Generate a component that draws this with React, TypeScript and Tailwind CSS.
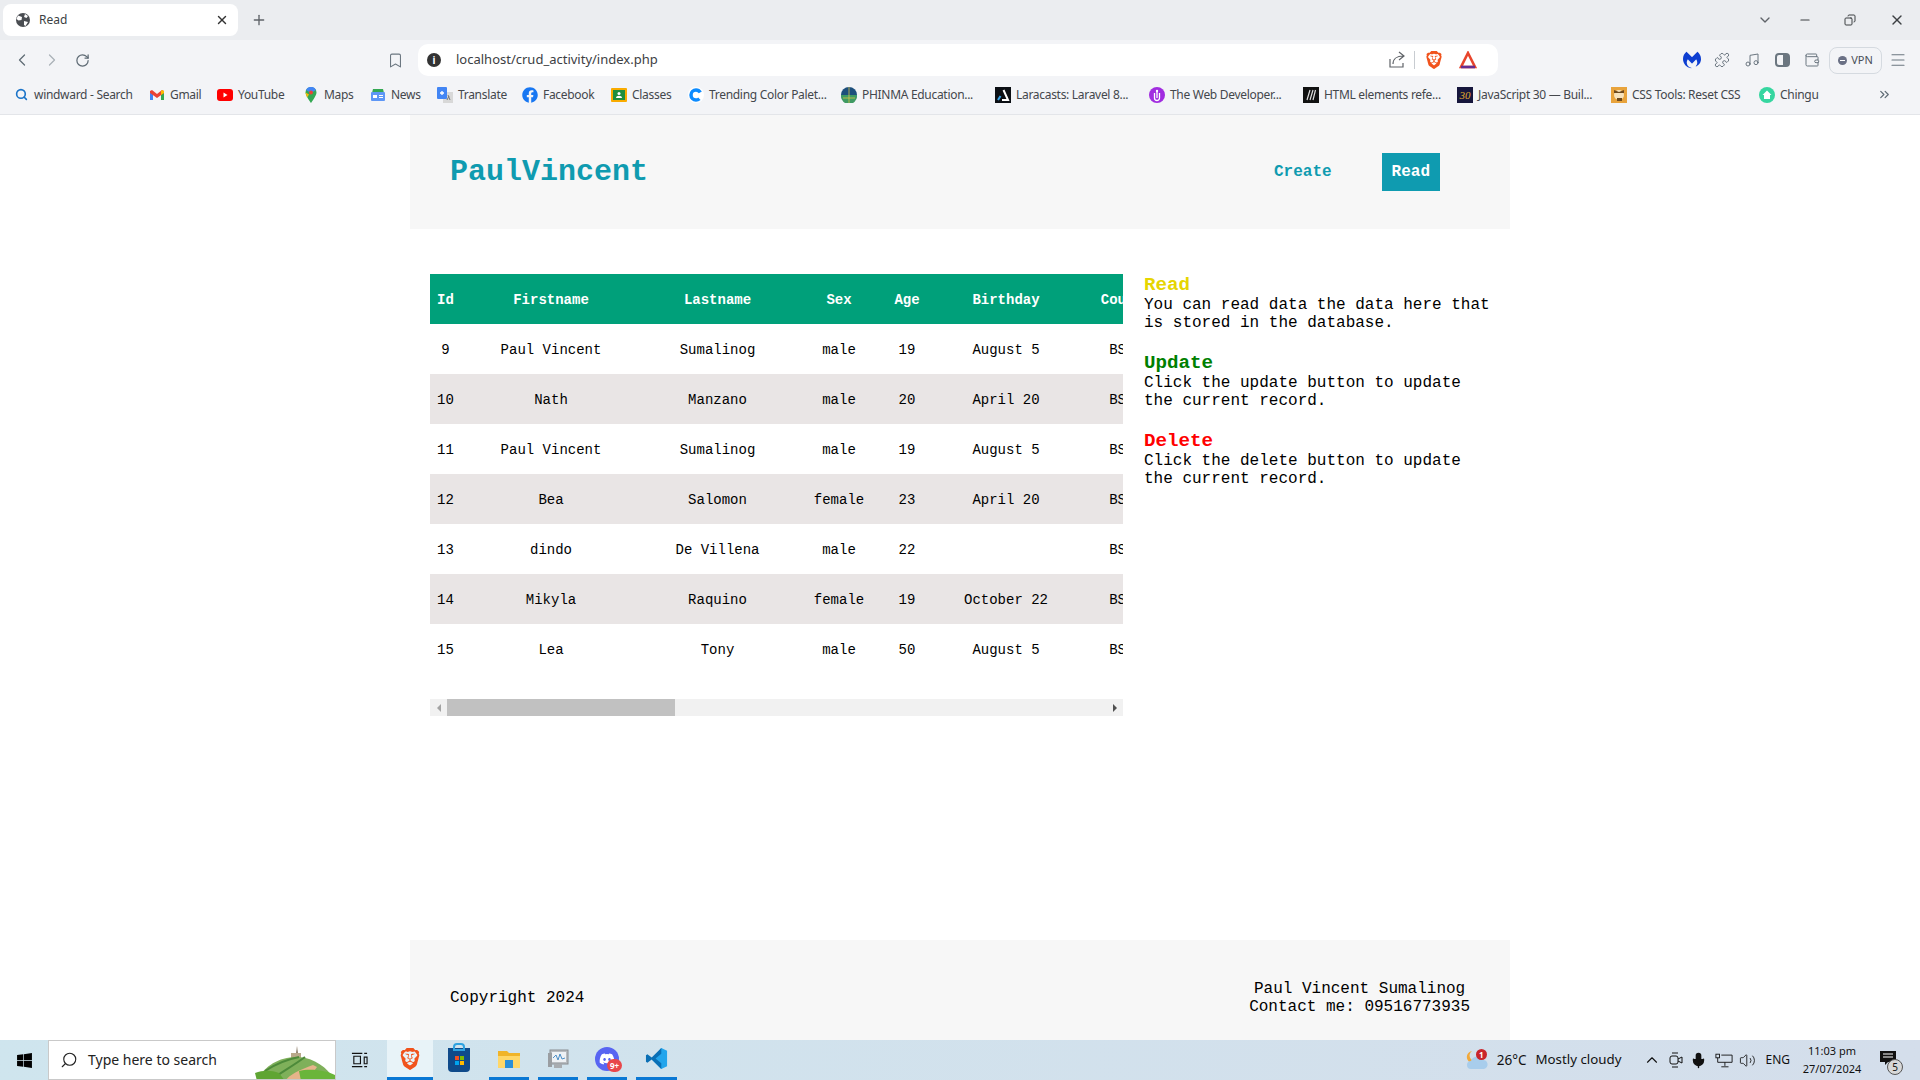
import { ChevronDown, ChevronLeft, ChevronRight, ChevronUp, ChevronsRight, Bookmark, Copy, Menu, Mic, Minus, Music, Plus, Puzzle, RotateCw, Search, Volume2, Wallet, X } from "lucide-react";
import { FaDiscord, FaFacebook, FaWindows } from "react-icons/fa";
import { SiBrave, SiMalwarebytes } from "react-icons/si";

const uiFont = "font-['Noto_Sans','Open_Sans',sans-serif]";

const rows = [
  ["9", "Paul Vincent", "Sumalinog", "male", "19", "August 5", "BSIT"],
  ["10", "Nath", "Manzano", "male", "20", "April 20", "BSIT"],
  ["11", "Paul Vincent", "Sumalinog", "male", "19", "August 5", "BSIT"],
  ["12", "Bea", "Salomon", "female", "23", "April 20", "BSIT"],
  ["13", "dindo", "De Villena", "male", "22", "", "BSIT"],
  ["14", "Mikyla", "Raquino", "female", "19", "October 22", "BSIT"],
  ["15", "Lea", "Tony", "male", "50", "August 5", "BSIT"],
];

const headers = ["Id", "Firstname", "Lastname", "Sex", "Age", "Birthday", "Course"];

function Favicon({ name }: { name: string }) {
  switch (name) {
    case "search":
      return <Search size={13} strokeWidth={3} className="text-[#1a73c8]" />;
    case "gmail":
      return (
        <svg viewBox="0 0 16 16" className="w-4 h-4">
          <path d="M1 4v9h3V7z" fill="#4285f4" />
          <path d="M15 4v9h-3V7z" fill="#34a853" />
          <path d="M1 4l2-1 5 4 5-4 2 1v2l-7 5-7-5z" fill="#ea4335" />
          <path d="M13 3l2 1v2l-3 2V4z" fill="#fbbc04" />
        </svg>
      );
    case "youtube":
      return (
        <svg viewBox="0 0 16 16" className="w-4 h-4">
          <rect x="0" y="2" width="16" height="12" rx="3" fill="#f00" />
          <path d="M6.5 5.5v5l4-2.5z" fill="#fff" />
        </svg>
      );
    case "maps":
      return (
        <svg viewBox="0 0 16 16" className="w-4 h-4">
          <path d="M8 0a5.5 5.5 0 0 0-5.5 5.5C2.500 9 8 16 8 16s5.500-7 5.500-10.500A5.500 5.500 0 0 0 8 0z" fill="#34a853" />
          <path d="M3 3l5 3 5-3a5.500 5.500 0 0 0-10 0z" fill="#4285f4" />
          <path d="M2.500 5.500l3.500 2-2 3z" fill="#fbbc04" />
          <circle cx="8" cy="5.500" r="2" fill="#ea4335" />
        </svg>
      );
    case "news":
      return (
        <svg viewBox="0 0 16 16" className="w-4 h-4">
          <path d="M3 2h10l1 4H2z" fill="#34a853" />
          <rect x="1" y="5" width="14" height="9" rx="1" fill="#5e97f6" />
          <rect x="3" y="8" width="4" height="3" fill="#fff" />
          <rect x="9" y="8" width="4" height="1" fill="#fff" />
          <rect x="9" y="10" width="4" height="1" fill="#fff" />
        </svg>
      );
    case "translate":
      return (
        <svg viewBox="0 0 16 16" className="w-4 h-4">
          <rect x="6" y="5" width="10" height="11" fill="#d8d8d8" />
          <rect x="0" y="0" width="10" height="12" rx="1" fill="#4285f4" />
          <path d="M3 6h4M5 4v4" stroke="#fff" strokeWidth="1.300" />
          <path d="M11 8l2 5M12 9l-2 4" stroke="#777" strokeWidth="1" />
        </svg>
      );
    case "facebook":
      return <FaFacebook size={16} className="text-[#1877f2]" />;
    case "classes":
      return (
        <svg viewBox="0 0 16 16" className="w-4 h-4">
          <rect x="0" y="1" width="16" height="14" rx="1" fill="#f9ab00" />
          <rect x="2" y="3" width="12" height="10" fill="#1e8e3e" />
          <circle cx="8" cy="6.500" r="1.500" fill="#fff" />
          <path d="M5 11c0-3 6-3 6 0z" fill="#fff" />
        </svg>
      );
    case "color":
      return (
        <svg viewBox="0 0 16 16" className="w-4 h-4">
          <circle cx="8" cy="8" r="8" fill="#fff" />
          <circle cx="8" cy="8" r="5" fill="none" stroke="#0d8bff" strokeWidth="3.500" strokeDasharray="24 8" strokeDashoffset="-4" />
        </svg>
      );
    case "phinma":
      return (
        <svg viewBox="0 0 16 16" className="w-4 h-4">
          <circle cx="8" cy="8" r="8" fill="#1d4f7c" />
          <path d="M0 8h16v1a8 8 0 0 1-16 0z" fill="#3f9a63" />
          <path d="M8 0v16M2 11h12" stroke="#d6c34a" strokeWidth="0.800" />
        </svg>
      );
    case "laracasts":
      return (
        <svg viewBox="0 0 16 16" className="w-4 h-4">
          <rect width="16" height="16" fill="#0b0f14" />
          <path d="M8.500 3L13 13H7" fill="none" stroke="#fff" strokeWidth="2" />
          <path d="M3 13l2.500-4" stroke="#38a3e8" strokeWidth="2" />
        </svg>
      );
    case "webdev":
      return (
        <svg viewBox="0 0 16 16" className="w-4 h-4">
          <circle cx="8" cy="8" r="8" fill="#a12ce0" />
          <path d="M5.500 6v5a2.500 2.500 0 0 0 5 0V6M8 5v6" fill="none" stroke="#fff" strokeWidth="1.300" />
          <circle cx="8" cy="4" r="1.200" fill="#fff" />
        </svg>
      );
    case "mdn":
      return (
        <svg viewBox="0 0 16 16" className="w-4 h-4">
          <rect width="16" height="16" fill="#111" />
          <path d="M4 13L7 3M7 13l3-10M10 13l2.500-10" stroke="#ddd" strokeWidth="1.200" />
        </svg>
      );
    case "js30":
      return (
        <div className="w-4 h-4 bg-[#16163c] text-[#e0a92e] text-[11px] leading-4 text-center italic font-['Liberation_Serif',serif]">
          30
        </div>
      );
    case "css":
      return (
        <svg viewBox="0 0 16 16" className="w-4 h-4">
          <rect width="16" height="16" fill="#e8a33c" />
          <circle cx="8" cy="8" r="5" fill="#f6e2bd" />
          <path d="M3 3l5 2 5-2v3H3zM6 11h5v3H6z" fill="#6e4a1f" />
        </svg>
      );
    default:
      return (
        <svg viewBox="0 0 16 16" className="w-4 h-4">
          <circle cx="8" cy="8" r="8" fill="#36d6a0" />
          <path d="M8 3.500L3.500 8H5v4h6V8h1.500z" fill="#fff" />
        </svg>
      );
  }
}

const bookmarks = [
  { icon: "search", label: "windward - Search", box: "w-[136px]" },
  { icon: "gmail", label: "Gmail", box: "w-[68px]" },
  { icon: "youtube", label: "YouTube", box: "w-[86px]" },
  { icon: "maps", label: "Maps", box: "w-[67px]" },
  { icon: "news", label: "News", box: "w-[67px]" },
  { icon: "translate", label: "Translate", box: "w-[85px]" },
  { icon: "facebook", label: "Facebook", box: "w-[89px]" },
  { icon: "classes", label: "Classes", box: "w-[77px]" },
  { icon: "color", label: "Trending Color Palet...", box: "w-[153px]" },
  { icon: "phinma", label: "PHINMA Education...", box: "w-[154px]" },
  { icon: "laracasts", label: "Laracasts: Laravel 8...", box: "w-[154px]" },
  { icon: "webdev", label: "The Web Developer...", box: "w-[154px]" },
  { icon: "mdn", label: "HTML elements refe...", box: "w-[154px]" },
  { icon: "js30", label: "JavaScript 30 — Buil...", box: "w-[154px]" },
  { icon: "css", label: "CSS Tools: Reset CSS", box: "w-[148px]" },
  { icon: "chingu", label: "Chingu", box: "w-[60px]" },
];

function BrowserChrome() {
  return (
    <div className={`shrink-0 ${uiFont}`}>
      {/* Tab strip */}
      <div className="h-10 bg-[#ebedf0] flex items-center">
        <div className="ml-[3px] w-[235px] h-8 bg-white rounded-lg flex items-center pl-3 pr-[9px]">
          <svg viewBox="0 0 16 16" className="w-4 h-4 shrink-0">
            <circle cx="8" cy="8" r="7" fill="#4a4d52" />
            <path d="M3 3.500L7 5l-.5 3-3 .5L1.500 7zM10 2l3 2-1.500 2L9 5zM9 9l4 1-2.500 4L9 13z" fill="#fff" />
          </svg>
          <span className="ml-2 text-xs text-[#3c3f43]">Read</span>
          <X size={14} strokeWidth={2.4} className="ml-auto text-[#333]" />
        </div>
        <Plus size={16} className="ml-[13px] text-[#5f6368]" />
        <div className="ml-auto flex items-center text-[#3c4043]">
          <ChevronDown size={16} className="mr-[25px] text-[#5f6368]" />
          <Minus size={14} className="mr-[32px]" />
          <Copy size={12} className="mr-[33px] -scale-x-100" />
          <X size={16} className="mr-[15px]" />
        </div>
      </div>

      {/* Toolbar */}
      <div className="h-10 bg-[#f3f4f7] flex items-center pl-[7px]">
        <div className="w-[30px] flex justify-center"><ChevronLeft size={20} strokeWidth={1.500} className="text-[#5f6b75]" /></div>
        <div className="w-[30px] flex justify-center"><ChevronRight size={20} strokeWidth={1.500} className="text-[#aab1b8]" /></div>
        <div className="w-[30px] flex justify-center"><RotateCw size={15} className="text-[#5f6b75]" /></div>
        <div className="w-[30px] ml-[283px] flex justify-center"><Bookmark size={17} strokeWidth={1.500} className="text-[#6b7680]" /></div>
        <div className="ml-2 w-[1080px] h-8 bg-white rounded-[10px] flex items-center pl-2 pr-[21px]">
          <div className="w-[14px] h-[14px] mx-px rounded-full bg-[#333] text-white text-[10px] leading-[14px] font-bold text-center">i</div>
          <span className="ml-[14px] text-[13px] text-[#3c4043]">localhost/crud_activity/index.php</span>
          <svg viewBox="0 0 18 18" className="ml-auto w-[18px] h-[18px]" fill="none" stroke="#5f6368" strokeWidth="1.200">
            <path d="M2 8v8h13v-4" />
            <path d="M5 13c0-5 4-8 10-8M11 1l5 4-5 4" />
          </svg>
          <div className="ml-2 w-px h-[18px] bg-[#c8ccd1]" />
          <SiBrave size={18} className="ml-[10px] text-[#f1531c]" />
          <svg viewBox="0 0 18 18" className="ml-4 w-[18px] h-[18px]">
            <path d="M9 2l7 14H2z" fill="none" stroke="#e8452c" strokeWidth="2.600" />
            <path d="M2 16h14" stroke="#662d91" strokeWidth="2.600" />
          </svg>
        </div>
        <div className="w-[30px] ml-[179px] flex justify-center"><SiMalwarebytes size={18} className="text-[#0d3ed1]" /></div>
        <div className="w-[30px] flex justify-center"><Puzzle size={16} strokeWidth={1.500} className="text-[#6b7680]" /></div>
        <div className="w-[30px] flex justify-center"><Music size={16} strokeWidth={1.500} className="text-[#6b7680]" /></div>
        <div className="w-[30px] flex justify-center">
          <div className="w-[15px] h-[14px] border-2 border-[#6b7680] rounded-sm flex justify-end"><div className="w-[5px] bg-[#6b7680]" /></div>
        </div>
        <div className="w-[30px] flex justify-center"><Wallet size={16} strokeWidth={1.500} className="text-[#6b7680]" /></div>
        <div className="ml-0.5 w-[53px] h-[27px] border border-[#d5dae0] rounded-lg flex items-center justify-center gap-1 text-[11px] text-[#4a4f57]">
          <div className="w-[9px] h-[9px] rounded-full bg-[#6a7085] flex items-center justify-center"><div className="w-[5px] h-px bg-white" /></div>
          VPN
        </div>
        <div className="w-[30px] ml-px flex justify-center"><Menu size={18} strokeWidth={1.500} className="text-[#6b7680]" /></div>
      </div>

      {/* Bookmarks bar */}
      <div className="h-[35px] pb-[5px] bg-[#f3f4f7] border-b border-[#e3e5e9] flex items-center pl-[13px]">
        {bookmarks.map((b) => (
          <div key={b.label} className={`${b.box} shrink-0 flex items-center whitespace-nowrap text-xs text-[#44474c]`}>
            <div className="w-4 h-4 flex items-center justify-center shrink-0"><Favicon name={b.icon} /></div>
            <span className="ml-[5px] tracking-[-0.3px]">{b.label}</span>
          </div>
        ))}
        <ChevronsRight size={15} className="ml-auto mr-7 text-[#5f6b75]" />
      </div>
    </div>
  );
}

function SideNote({ title, color, text }: { title: string; color: string; text: string }) {
  return (
    <div className="mb-5">
      <h3 className={`text-[19.2px] leading-[22px] font-bold ${color}`}>{title}</h3>
      <p className="text-base leading-[18px] text-black">{text}</p>
    </div>
  );
}

function ReadTable() {
  return (
    <div className="w-[693px] shrink-0">
      <div className="overflow-hidden">
        <table className="w-[740px] max-w-none table-fixed border-collapse text-sm text-black">
          <colgroup>
            <col className="w-[31px]" />
            <col className="w-[180px]" />
            <col className="w-[153px]" />
            <col className="w-[90px]" />
            <col className="w-[46px]" />
            <col className="w-[152px]" />
            <col className="w-[88px]" />
          </colgroup>
          <thead>
            <tr className="h-[50px] bg-[#00a07a] text-white">
              {headers.map((h) => (
                <th key={h} className="px-[7px] pt-[2px] text-center font-bold">{h}</th>
              ))}
            </tr>
          </thead>
          <tbody>
            {rows.map((row) => (
              <tr key={row[0]} className="h-[50px] even:bg-[#e9e5e5]">
                {row.map((cell, i) => (
                  <td key={i} className="px-[7px] pt-[2px] text-center whitespace-nowrap">{cell}</td>
                ))}
              </tr>
            ))}
          </tbody>
        </table>
      </div>

      {/* horizontal scrollbar */}
      <div className="mt-[25px] h-[17px] bg-[#f1f1f1] flex">
        <div className="w-[17px] flex items-center justify-center">
          <div className="border-y-[4px] border-y-transparent border-r-[4px] border-r-[#a3a3a3]" />
        </div>
        <div className="w-[228px] bg-[#c1c1c1]" />
        <div className="ml-auto w-[17px] flex items-center justify-center">
          <div className="border-y-[4px] border-y-transparent border-l-[4px] border-l-[#505050]" />
        </div>
      </div>
    </div>
  );
}

function Taskbar() {
  return (
    <div className={`h-10 shrink-0 bg-gradient-to-r from-[#cfe5ee] to-[#d4deeb] flex items-stretch text-[#111] ${uiFont}`}>
      <div className="w-12 flex items-center justify-center"><FaWindows size={17} className="text-black" /></div>
      <div className="w-[288px] bg-white border border-[#c9c9c9] flex items-center overflow-hidden relative">
        <Search size={18} strokeWidth={1.500} className="ml-[11px] -scale-x-100 text-[#222]" />
        <span className="ml-[10px] text-sm text-[#222]">Type here to search</span>
        <svg viewBox="0 0 80 40" className="absolute right-0 top-0 w-20 h-10">
          <path d="M41 14l1-9 1 9z" fill="#6d5a40" />
          <rect x="36" y="12" width="10" height="5" fill="#b9a98a" />
          <path d="M2 40c6-14 22-25 42-24 16 1 30 12 36 24z" fill="#7fb05a" />
          <path d="M10 30c12-8 24-12 34-14M20 36c12-8 22-14 30-20" stroke="#4d8a3a" strokeWidth="2" fill="none" />
          <path d="M30 40c6-8 18-12 28-16l4 2-10 14z" fill="#e6b48a" />
          <path d="M0 32c8-3 16-3 24 0l6 8H2z" fill="#5fa533" />
          <path d="M44 30c8-2 24-2 36 4v6H46z" fill="#6ab53a" />
        </svg>
      </div>
      <div className="w-[51px] pr-1 flex items-center justify-center">
        <svg viewBox="0 0 18 16" className="w-[17px] h-4" fill="none" stroke="#111" strokeWidth="1.200">
          <path d="M1 1h11M1 15h11M3 4h7v8H3zM14 1h3M14 5h3v7h-3zM14 15h3" />
        </svg>
      </div>
      <div className="w-[46px] bg-[#e8f3f8] border-b-[3px] border-[#0a78d4] flex items-center justify-center"><SiBrave size={22} className="text-[#f1531c]" /></div>
      <div className="w-[56px] pr-1 flex items-center justify-center">
        <div className="w-[22px] h-6 rounded-b bg-[#0f4a8a] flex items-center justify-center relative">
          <div className="absolute -top-[5px] w-3 h-2 border-2 border-[#2ea2e0] rounded-t" />
          <div className="grid grid-cols-2 gap-px">
            <div className="w-1 h-1 bg-[#f25022]" /><div className="w-1 h-1 bg-[#7fba00]" />
            <div className="w-1 h-1 bg-[#00a4ef]" /><div className="w-1 h-1 bg-[#ffb900]" />
          </div>
        </div>
      </div>
      <div className="w-10 border-b-[3px] border-[#0a78d4] flex items-center justify-center">
        <svg viewBox="0 0 22 20" className="w-[22px] h-5">
          <path d="M0 2h9l2 2h11v15H0z" fill="#f0b429" />
          <path d="M0 7h22v12H0z" fill="#ffd768" />
          <rect x="7" y="11" width="8" height="8" fill="#2a8fd8" />
        </svg>
      </div>
      <div className="w-10 ml-[9px] border-b-[3px] border-[#0a78d4] flex items-center justify-center">
        <svg viewBox="0 0 22 22" className="w-[22px] h-[22px]">
          <rect x="3" y="2" width="18" height="14" fill="#b8bcc0" stroke="#8a8e92" />
          <rect x="5" y="4" width="14" height="10" fill="#eef1f4" />
          <path d="M6 10l3-3 2 5 2-6 2 5 3-1" stroke="#4d8fc7" fill="none" />
          <rect x="1" y="5" width="4" height="14" fill="#9a9ea2" />
          <rect x="7" y="16" width="8" height="4" fill="#a8acb0" />
        </svg>
      </div>
      <div className="w-10 ml-[9px] border-b-[3px] border-[#0a78d4] flex items-center justify-center relative">
        <div className="w-6 h-6 rounded-full bg-[#5865f2] flex items-center justify-center"><FaDiscord size={16} className="text-white" /></div>
        <div className="absolute left-[20px] top-[19px] w-[15px] h-[13px] rounded-full bg-[#e8474b] text-white text-[8px] leading-[13px] text-center font-bold">9+</div>
      </div>
      <div className="w-[41px] ml-[9px] border-b-[3px] border-[#0a78d4] flex items-center justify-center">
        <svg viewBox="0 0 24 24" className="w-[23px] h-[23px]">
          <path d="M17 1l6 3v16l-6 3-10-10z" fill="#23a5ec" />
          <path d="M17 1L7 11 2.500 7.500 1 8.500v7l1.500 1L7 13l10 10 0-6-6-5 6-5z" fill="#0a6fb5" />
        </svg>
      </div>

      <div className="ml-auto flex items-center">
        <div className="w-[34px] h-full flex items-center justify-center relative">
          <svg viewBox="0 0 24 20" className="w-6 h-5">
            <path d="M7 1a6 6 0 1 0 6 9 5 5 0 0 1-6-9z" fill="#f2a93b" />
            <path d="M6 19a4 4 0 0 1 0-8 6 6 0 0 1 11-1 4.500 4.500 0 0 1 2 9z" fill="#a8cdec" />
          </svg>
          <div className="absolute left-[16px] top-[9px] w-[11px] h-[11px] rounded-full bg-[#c9252b] text-white text-[8px] leading-[11px] text-center font-bold">1</div>
        </div>
        <span className="ml-[3px] text-[13.5px] whitespace-nowrap">26°C</span>
        <span className="ml-[9px] text-[13.3px] whitespace-nowrap">Mostly cloudy</span>
        <ChevronUp size={18} strokeWidth={1.500} className="ml-[22px]" />
        <svg viewBox="0 0 14 18" className="ml-2 w-[14px] h-[18px]" fill="none" stroke="#111" strokeWidth="1">
          <path d="M3 2h6M3 16h6" />
          <rect x="1" y="5" width="8" height="8" rx="2" />
          <path d="M9 8l4-2v6l-4-2" />
        </svg>
        <Mic size={17} className="ml-[7px] fill-[#111]" />
        <svg viewBox="0 0 20 16" className="ml-2 w-[18px] h-[15px]" fill="none" stroke="#111" strokeWidth="1">
          <rect x="1" y="1" width="4" height="4" />
          <path d="M3 5v5h16V2H7M11 10v4M7 15h8" />
        </svg>
        <Volume2 size={17} strokeWidth={1.200} className="ml-[6px]" />
        <span className="ml-[9px] text-xs whitespace-nowrap">ENG</span>
        <div className="ml-2 w-[68px] text-[11px] leading-[18px] text-center whitespace-nowrap">
          <div>11:03 pm</div>
          <div>27/07/2024</div>
        </div>
        <div className="ml-[14px] w-10 h-full relative">
          <svg viewBox="0 0 16 15" className="absolute left-0 top-[11px] w-4 h-[15px]">
            <path d="M0 0h16v11H8l-3 3v-3H0z" fill="#111" />
            <path d="M3 3h10M3 6h10" stroke="#fff" />
          </svg>
          <div className="absolute left-[7px] top-[19px] w-4 h-4 rounded-full bg-[#d8d8d8] border border-[#555] text-[10px] leading-[14px] text-center">5</div>
        </div>
      </div>
    </div>
  );
}

export default function App() {
  return (
    <div className="h-screen flex flex-col overflow-hidden bg-white">
      <BrowserChrome />

      <div className="flex-1 min-h-0 overflow-hidden font-['Liberation_Mono',monospace]">
        <div className="w-[1100px] mx-auto">
          {/* Header */}
          <header className="h-[114px] bg-[#f7f7f7] flex items-center px-10">
            <h1 className="text-3xl font-bold text-[#0f9bb0]">PaulVincent</h1>
            <nav className="ml-auto mr-[30px] flex items-center gap-[30px] text-base font-bold">
              <a className="px-5 py-[10px] text-[#0f9bb0]">Create</a>
              <a className="px-[10px] h-[38px] leading-[38px] bg-[#0f9bb0] text-white">Read</a>
            </nav>
          </header>

          {/* Main */}
          <main className="h-[711px] pt-[45px] pl-5 flex gap-[21px]">
            <ReadTable />
            <aside className="flex-1 pr-5">
              <SideNote title="Read" color="text-[#e6d500]" text="You can read data the data here that is stored in the database." />
              <SideNote title="Update" color="text-[#008000]" text="Click the update button to update the current record." />
              <SideNote title="Delete" color="text-[#ff0000]" text="Click the delete button to update the current record." />
            </aside>
          </main>

          {/* Footer */}
          <footer className="h-[114px] pt-[2px] bg-[#f7f7f7] flex items-center justify-between px-10 text-base leading-[18px] text-black">
            <p>Copyright 2024</p>
            <div className="text-center">
              <p>Paul Vincent Sumalinog</p>
              <p>Contact me: 09516773935</p>
            </div>
          </footer>
        </div>
      </div>

      <Taskbar />
    </div>
  );
}
